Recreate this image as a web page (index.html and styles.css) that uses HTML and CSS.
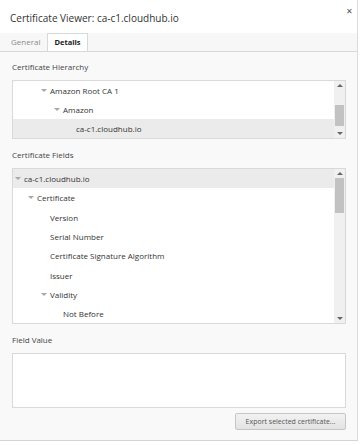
FILE: index.html
```html
<!DOCTYPE html>
<html lang="en">
<head>
  <meta charset="UTF-8">
  <meta name="viewport" content="width=device-width, initial-scale=1.0">
  <title>Certificate Viewer</title>
  <link rel="stylesheet" href="styles.css">
</head>
<body>

  <div class="dialog">
    <div class="titlebar">
      <span class="title">Certificate Viewer: ca-c1.cloudhub.io</span>
      <span class="close">&#x2715;</span>
    </div>

    <div class="tabs">
      <div class="tab">General</div>
      <div class="tab active">Details</div>
    </div>

    <div class="content">
      <div class="label label-first">Certificate Hierarchy</div>
      <div class="box tree-box hierarchy">
        <div class="rows">
          <div class="row lv2"><span class="twisty open"></span>Amazon Root CA 1</div>
          <div class="row lv3"><span class="twisty open"></span>Amazon</div>
          <div class="row lv4 selected"><span class="twisty"></span>ca-c1.cloudhub.io</div>
        </div>
        <div class="scrollbar">
          <span class="arrow up"></span>
          <div class="track">
            <div class="thumb" style="margin-top: 15px; height: 21px;"></div>
          </div>
          <span class="arrow down"></span>
        </div>
      </div>

      <div class="label">Certificate Fields</div>
      <div class="box tree-box fields">
        <div class="rows">
          <div class="row lv0 selected"><span class="twisty open"></span>ca-c1.cloudhub.io</div>
          <div class="row lv1"><span class="twisty open"></span>Certificate</div>
          <div class="row lv2"><span class="twisty"></span>Version</div>
          <div class="row lv2"><span class="twisty"></span>Serial Number</div>
          <div class="row lv2"><span class="twisty"></span>Certificate Signature Algorithm</div>
          <div class="row lv2"><span class="twisty"></span>Issuer</div>
          <div class="row lv2"><span class="twisty open"></span>Validity</div>
          <div class="row lv3"><span class="twisty"></span>Not Before</div>
        </div>
        <div class="scrollbar">
          <span class="arrow up"></span>
          <div class="track">
            <div class="thumb" style="margin-top: 0; height: 35px;"></div>
          </div>
          <span class="arrow down"></span>
        </div>
      </div>

      <div class="label">Field Value</div>
      <div class="box value-box"></div>

      <div class="actions">
        <button class="export">Export selected certificate...</button>
      </div>
    </div>
  </div>

</body>
</html>
```

FILE: styles.css
```css
body {
  margin: 0;
  background-color: #fff;
  font-family: 'Open Sans', 'Noto Sans', sans-serif;
  color: #444;
}

.dialog {
  width: 358px;
  height: 441px;
  background-color: #f9f9f9;
  border-right: 1px solid #dcdcdc;
  border-bottom: 1px solid #d4d4d4;
  box-sizing: border-box;
}

.titlebar {
  height: 33px;
  background-color: #fff;
  display: flex;
  align-items: center;
  justify-content: space-between;
  padding: 0 4px 0 10px;
}

.title {
  font-size: 10px;
  color: #333;
  margin-top: 2px;
}

.close {
  font-size: 8px;
  color: #555;
  align-self: flex-start;
  margin-top: 5px;
}

.tabs {
  height: 18px;
  display: flex;
  padding-left: 4px;
  border-bottom: 1px solid #d8d8d8;
  background-color: #f7f7f7;
}

.tab {
  font-size: 8px;
  color: #8a8a8a;
  padding: 0 7px;
  line-height: 18px;
}

.tab.active {
  color: #222;
  font-size: 7.5px;
  font-weight: bold;
  background-color: #fff;
  border: 1px solid #d8d8d8;
  border-bottom: none;
  margin-left: 0;
  margin-bottom: -1px;
  line-height: 17px;
  height: 18px;
  box-sizing: border-box;
  padding: 0 6px;
}

.content {
  padding: 0 11px 0 12px;
}

.label {
  font-size: 8px;
  color: #444;
  line-height: 12px;
  margin: 10px 0 7px;
}

.label-first {
  margin-top: 9px;
}

.box {
  background-color: #fff;
  border: 1px solid #d9d9d9;
}

.tree-box {
  display: flex;
}

.rows {
  flex: 1;
}

.row {
  display: flex;
  align-items: center;
  font-size: 8px;
  color: #333;
  height: 19px;
}

.fields .row {
  height: 19.3px;
}

.row.selected {
  background-color: #ebebeb;
}

.lv0 { padding-left: 2px; }
.lv1 { padding-left: 15px; }
.lv2 { padding-left: 28px; }
.lv3 { padding-left: 41px; }
.lv4 { padding-left: 54px; }

.twisty {
  width: 6px;
  margin-right: 3px;
  flex-shrink: 0;
}

.twisty.open {
  width: 0;
  height: 0;
  border-left: 3px solid transparent;
  border-right: 3px solid transparent;
  border-top: 3px solid #a8a8a8;
}

.scrollbar {
  width: 11px;
  background-color: #f0f0f0;
  display: flex;
  flex-direction: column;
  align-items: center;
}

.track {
  flex: 1;
  width: 100%;
}

.thumb {
  background-color: #c2c2c2;
  margin: 0 1px;
}

.arrow {
  width: 0;
  height: 0;
  border-left: 3px solid transparent;
  border-right: 3px solid transparent;
  margin: 3px 0;
}

.arrow.up {
  border-bottom: 3px solid #666;
}

.arrow.down {
  border-top: 3px solid #666;
}

.value-box {
  height: 53px;
}

.actions {
  display: flex;
  justify-content: flex-end;
  margin-top: 5px;
}

.export {
  font-family: 'Open Sans', 'Noto Sans', sans-serif;
  font-size: 7px;
  color: #555;
  width: 111px;
  height: 17px;
  padding: 0;
  border: 1px solid #c6c6c6;
  border-radius: 2px;
  background: linear-gradient(#f2f2f2, #e3e3e3);
}
```
